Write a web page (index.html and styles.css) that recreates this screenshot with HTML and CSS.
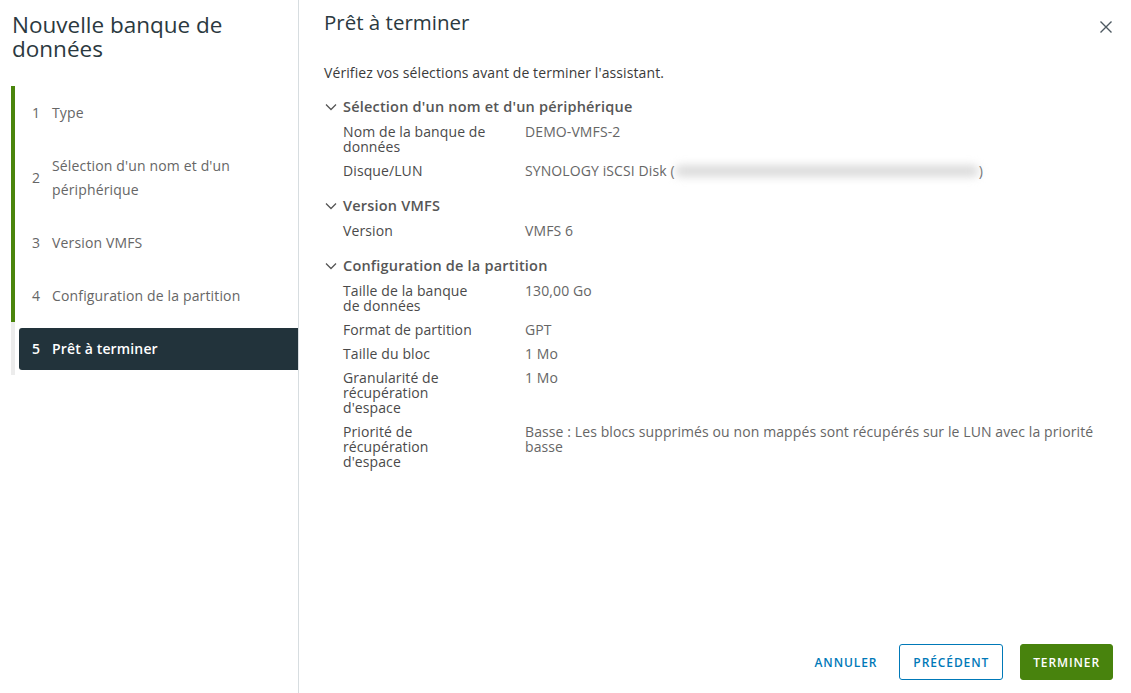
FILE: index.html
```html
<!DOCTYPE html>
<html lang="fr">
<head>
<meta charset="utf-8">
<title>Nouvelle banque de données</title>
<link rel="stylesheet" href="styles.css">
</head>
<body>
<div class="wizard">
  <aside class="sidebar">
    <h2 class="wiz-title">Nouvelle banque de données</h2>
    <ol class="steps">
      <li class="step done"><div class="step-inner"><span class="num">1</span><span class="label">Type</span></div></li>
      <li class="step done"><div class="step-inner"><span class="num">2</span><span class="label">Sélection d'un nom et d'un périphérique</span></div></li>
      <li class="step done"><div class="step-inner"><span class="num">3</span><span class="label">Version VMFS</span></div></li>
      <li class="step done"><div class="step-inner"><span class="num">4</span><span class="label">Configuration de la partition</span></div></li>
      <li class="step current"><div class="step-inner"><span class="num">5</span><span class="label">Prêt à terminer</span></div></li>
    </ol>
  </aside>
  <main class="main">
    <div class="header">
      <h3 class="page-title">Prêt à terminer</h3>
      <button class="close" aria-label="Fermer">
        <svg width="12" height="12" viewBox="0 0 12 12"><path d="M0.5 0.5 L11.5 11.5 M11.5 0.5 L0.5 11.5" stroke="#4d5961" stroke-width="1.4" fill="none"/></svg>
      </button>
    </div>
    <p class="intro">Vérifiez vos sélections avant de terminer l'assistant.</p>

    <section class="sect">
      <div class="sect-head"><svg class="chev" width="12" height="8" viewBox="0 0 12 8"><path d="M1 1.5 L6 6.5 L11 1.5" stroke="#565656" stroke-width="1.3" fill="none"/></svg><span>Sélection d'un nom et d'un périphérique</span></div>
      <div class="rows">
        <div class="row"><div class="k">Nom de la banque de<br>données</div><div class="v">DEMO-VMFS-2</div></div>
        <div class="row"><div class="k">Disque/LUN</div><div class="v">SYNOLOGY iSCSI Disk (<span class="blur"></span>)</div></div>
      </div>
    </section>

    <section class="sect">
      <div class="sect-head"><svg class="chev" width="12" height="8" viewBox="0 0 12 8"><path d="M1 1.5 L6 6.5 L11 1.5" stroke="#565656" stroke-width="1.3" fill="none"/></svg><span>Version VMFS</span></div>
      <div class="rows">
        <div class="row"><div class="k">Version</div><div class="v">VMFS 6</div></div>
      </div>
    </section>

    <section class="sect">
      <div class="sect-head"><svg class="chev" width="12" height="8" viewBox="0 0 12 8"><path d="M1 1.5 L6 6.5 L11 1.5" stroke="#565656" stroke-width="1.3" fill="none"/></svg><span>Configuration de la partition</span></div>
      <div class="rows">
        <div class="row"><div class="k">Taille de la banque<br>de données</div><div class="v">130,00 Go</div></div>
        <div class="row"><div class="k">Format de partition</div><div class="v">GPT</div></div>
        <div class="row"><div class="k">Taille du bloc</div><div class="v">1 Mo</div></div>
        <div class="row"><div class="k">Granularité de<br>récupération<br>d'espace</div><div class="v">1 Mo</div></div>
        <div class="row"><div class="k">Priorité de<br>récupération<br>d'espace</div><div class="v">Basse : Les blocs supprimés ou non mappés sont récupérés sur le LUN avec la priorité basse</div></div>
      </div>
    </section>

    <div class="footer">
      <button class="btn btn-link">ANNULER</button>
      <button class="btn btn-outline">PRÉCÉDENT</button>
      <button class="btn btn-primary">TERMINER</button>
    </div>
  </main>
</div>
</body>
</html>
```

FILE: styles.css
```css
* { box-sizing: border-box; }
html, body { margin: 0; padding: 0; }
body {
  font-family: "Open Sans", "Liberation Sans", sans-serif;
  background: #fff;
  color: #565656;
  width: 1131px;
  height: 693px;
  overflow: hidden;
}
.wizard {
  display: flex;
  height: 693px;
}
.sidebar {
  width: 299px;
  flex: none;
  border-right: 1px solid #d7dde0;
}
.wiz-title {
  margin: 0;
  padding: 13px 0 0 12px;
  font-size: 22.5px;
  line-height: 24px;
  font-weight: 400;
  color: #2b3940;
  letter-spacing: 0;
}
.steps {
  list-style: none;
  margin: 25px 0 0 11px;
  padding: 0;
}
.step {
  border-left: 4px solid #ececec;
  padding: 6px 0 5px 4px;
}
.step.done { border-left-color: #4a850c; }
.step-inner {
  display: flex;
  align-items: center;
  min-height: 42px;
  padding: 9px 12px 9px 13px;
  font-size: 14px;
  letter-spacing: 0.15px;
  line-height: 24px;
  color: #666;
  border-radius: 3px 0 0 3px;
}
.num { width: 20px; flex: none; }
.label { padding-right: 20px; }
.step.current .step-inner {
  background: #22333b;
  color: #fff;
  font-weight: 600;
}
.main {
  flex: 1;
  display: flex;
  flex-direction: column;
  padding: 0 18px 13px 25px;
}
.header {
  display: flex;
  justify-content: space-between;
  align-items: flex-start;
  padding-top: 10px;
}
.page-title {
  margin: 0;
  font-size: 20.5px;
  line-height: 24px;
  font-weight: 400;
  color: #2b3940;
}
.close {
  margin: 11px 1px 0 0;
  padding: 0;
  border: 0;
  background: none;
  width: 12px;
  height: 12px;
  display: block;
}
.close svg { display: block; }
.intro {
  margin: 30px 0 16px;
  font-size: 14px;
  letter-spacing: 0.1px;
  line-height: 18px;
  color: #3a3a3a;
}
.sect { margin-bottom: 19px; }
.sect-head {
  display: flex;
  align-items: center;
  font-size: 14.5px;
  letter-spacing: 0.2px;
  line-height: 18px;
  font-weight: 600;
  color: #565656;
  margin-bottom: 8px;
}
.chev { margin: 0 6px 0 1px; flex: none; }
.rows {
  display: flex;
  flex-direction: column;
  gap: 9px;
  padding-left: 19px;
}
.row {
  display: flex;
  font-size: 14px;
  letter-spacing: 0.1px;
  line-height: 15px;
}
.row:nth-child(n) { min-height: 15px; }
.k {
  width: 170px;
  flex: none;
  margin-right: 12px;
  color: #4a4a4a;
}
.v { flex: 1; color: #666; }
.blur {
  display: inline-block;
  width: 304px;
  height: 12px;
  vertical-align: -1px;
  background: #dcdcdc;
  border-radius: 6px;
  filter: blur(4px);
}
.footer {
  margin-top: auto;
  display: flex;
  justify-content: flex-end;
  align-items: center;
}
.btn {
  height: 36px;
  padding: 0 12px;
  font-family: inherit;
  font-size: 12px;
  font-weight: 600;
  letter-spacing: 0.9px;
  border-radius: 3px;
  background: none;
  border: 1px solid transparent;
  cursor: pointer;
}
.btn-link { color: #0079b8; margin-right: 9px; }
.btn-outline { color: #0079b8; border-color: #0079b8; margin-right: 17px; padding: 0 13px; }
.btn-primary { background: #48830d; border-color: #48830d; color: #fff; }
```
